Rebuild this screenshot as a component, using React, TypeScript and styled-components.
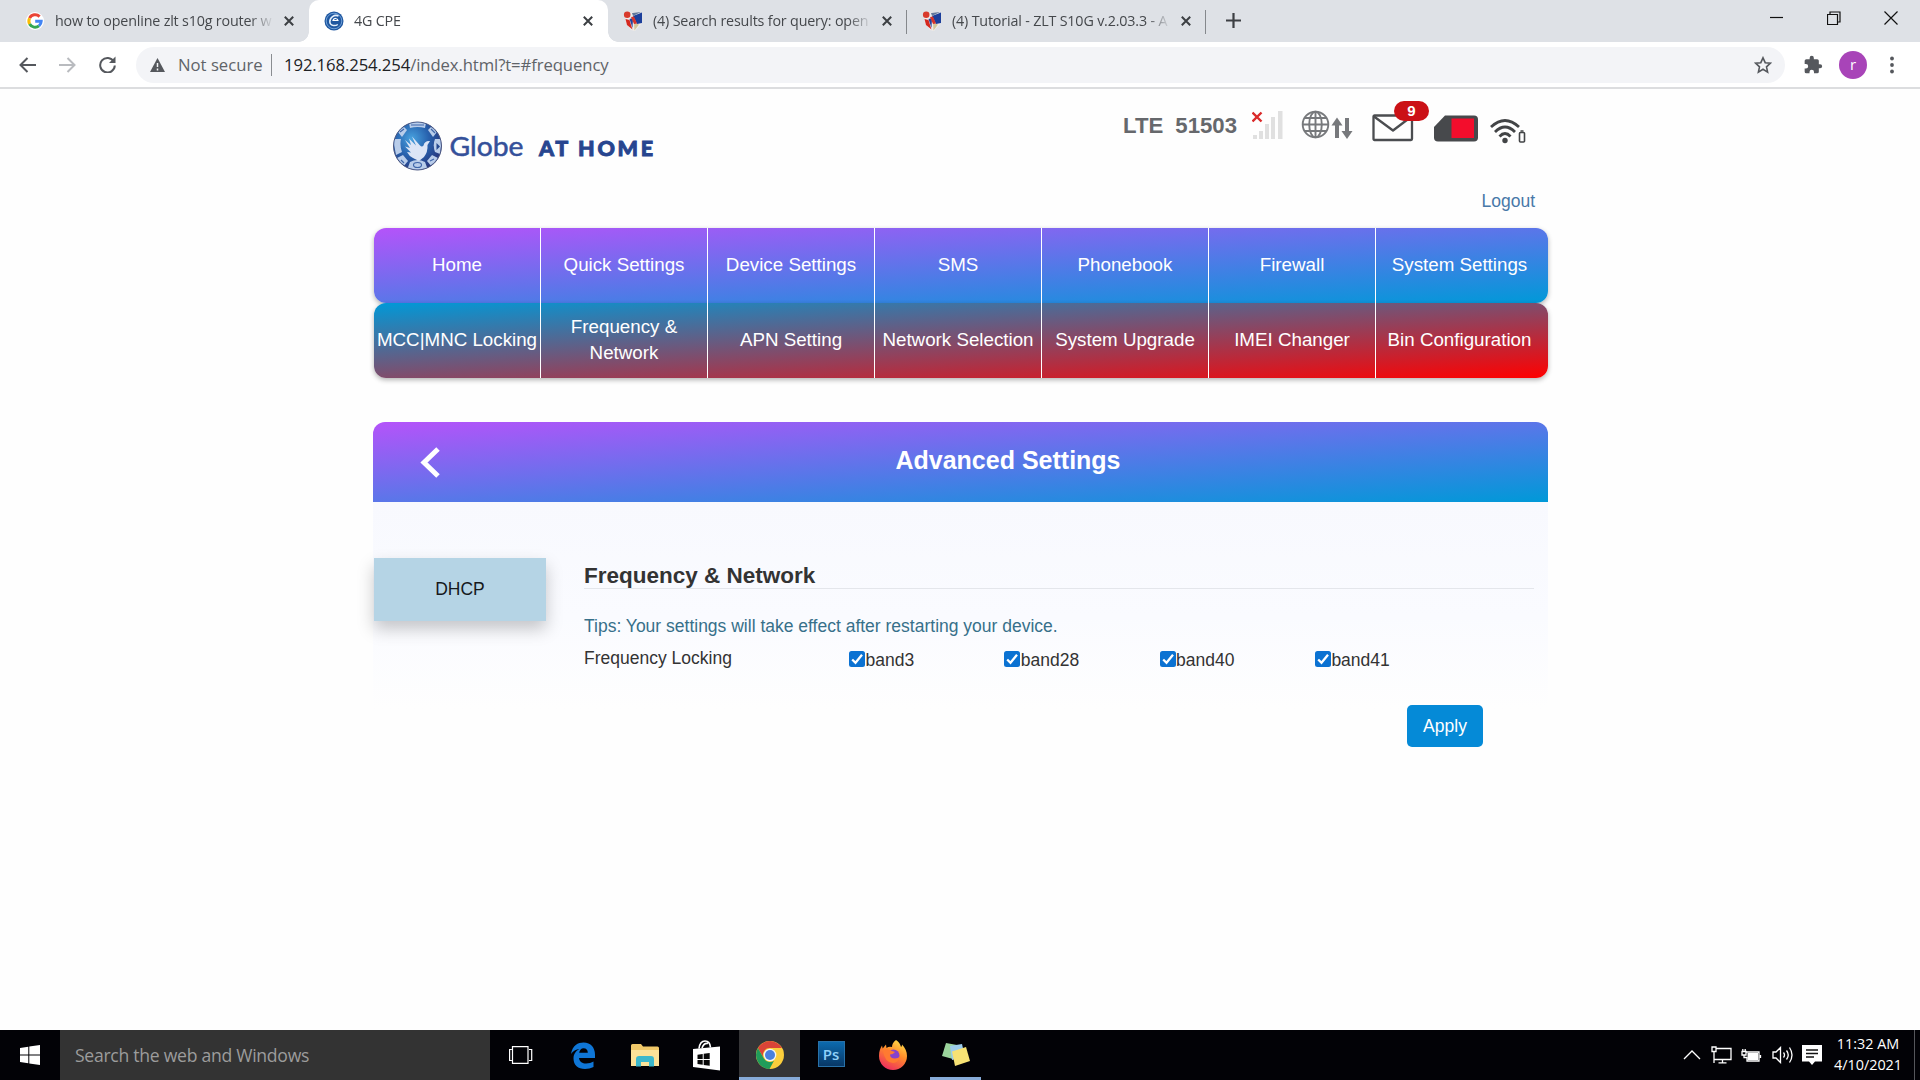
import type { ReactNode } from "react";
import styled, { createGlobalStyle, css } from "styled-components";

interface TabData {
  title: string;
  icon: ReactNode;
  active?: boolean;
  divider?: boolean;
}

const mainMenu = ["Home", "Quick Settings", "Device Settings", "SMS", "Phonebook", "Firewall", "System Settings"];
const extraMenu = [
  "MCC|MNC Locking",
  "Frequency & Network",
  "APN Setting",
  "Network Selection",
  "System Upgrade",
  "IMEI Changer",
  "Bin Configuration",
];
const bands = ["band3", "band28", "band40", "band41"];

const GoogleIcon = () => (
  <svg width="18" height="18" viewBox="0 0 18 18" fill="none" strokeWidth="3">
    <circle cx="9" cy="9" r="9" fill="#fff" />
    <path d="M13.6 4.6A6.2 6.2 0 0 0 3.6 6.2" stroke="#ea4335" />
    <path d="M3.6 6.2a6.2 6.2 0 0 0 0 5.8" stroke="#fbbc05" />
    <path d="M3.6 12a6.2 6.2 0 0 0 9.4 1.8" stroke="#34a853" />
    <path d="M13 13.8A6.2 6.2 0 0 0 15.2 9.2H9.2" stroke="#4285f4" />
  </svg>
);

const CpeIcon = () => (
  <svg width="20" height="20" viewBox="0 0 20 20" fill="none">
    <circle cx="10" cy="10" r="9.5" fill="#1f57a0" />
    <circle cx="10" cy="10" r="7.8" stroke="#6fa0d8" strokeWidth="1" />
    <path d="M14.500 5C10.500 3 5.500 6.500 5.800 11c.3 3.600 5 4.600 8 2.500" stroke="#e4effb" strokeWidth="1.500" />
    <path d="M14 9.500H9c.6-2.800 4.600-2.600 5 0z" stroke="#fff" strokeWidth="1.200" />
  </svg>
);

const ShieldIcon = () => (
  <svg width="20" height="22" viewBox="0 0 20 22">
    <path d="M2 5l8-3 9 1v10l-7 8-4-1-5-7z" fill="#f0ecea" />
    <path d="M10 6l9-3.500V13l-5 1z" fill="#1c3f9b" />
    <path d="M2.500 9l4 1 3 9.500L4 15z" fill="#d5281f" />
    <path d="M6.500 9l3.500-1-.5 10z" fill="#23429c" />
    <path d="M11 13l5 1.500-4.500 6z" fill="#d3c79a" />
    <path d="M9 3l9-1-8 4z" fill="#60779b" />
    <path d="M8 7l3-.5 3 7-3 .5z" fill="#d8342a" />
    <circle cx="4.200" cy="4.800" r="3.300" fill="#d83a2c" />
  </svg>
);

const tabs: TabData[] = [
  { title: "how to openline zlt s10g router w", icon: <GoogleIcon /> },
  { title: "4G CPE", icon: <CpeIcon />, active: true },
  { title: "(4) Search results for query: open", icon: <ShieldIcon />, divider: true },
  { title: "(4) Tutorial - ZLT S10G v.2.03.3 - A", icon: <ShieldIcon />, divider: true },
];

const GlobeAtHomeLogo = () => (
  <svg width="270" height="52" viewBox="0 0 270 52">
    <defs>
      <radialGradient id="ball" cx="38%" cy="35%" r="70%">
        <stop offset="0" stopColor="#48a2df" />
        <stop offset=".5" stopColor="#2862ae" />
        <stop offset="1" stopColor="#27347a" />
      </radialGradient>
      <clipPath id="ballClip">
        <circle cx="25.500" cy="26" r="23.500" />
      </clipPath>
    </defs>
    <circle cx="25.500" cy="26" r="24" fill="url(#ball)" stroke="#4a5680" strokeWidth="1" />
    <g clipPath="url(#ballClip)" fill="#b9cdea">
      <path d="M17 3q8.500-3 17 0l-1 5q-7.500-2-15 0z" />
      <path d="M6 12l5-6 4 4-5 7z" />
      <path d="M45 12l-5-6-4 4 5 7z" />
      <path d="M1 19h8q-1.500 6 1 13l-6 3z" />
      <path d="M50 19h-7q-2.500 6 0 13l5 2z" />
      <path d="M5 38l6-3 5 6-5 6z" />
      <path d="M46 38l-6-3-5 6 5 6z" />
      <path d="M18 42q7.500-4 15 0l3 8H15z" />
    </g>
    <g fill="none" stroke="#3f66a9" strokeWidth="1.2">
      <ellipse cx="25.500" cy="45" rx="4" ry="2.500" />
      <path d="M19 5h13M8 12l4-3M39 9l4 4M9 40l3 3M38 41l4-2" />
    </g>
    <path d="M44.500 23l3.500 3.500-3.500 3.500z" fill="#24488f" />
    <path
      d="M17 18.500l7 7-4-9 8 9q2 2 3.500 0 1-5 6.500-4.500l-2.500 4q.5 7-3.500 12l-5 4-6-3q-4-2-6-6l4 .5-6-6 5 1.500-5-8 6 5z"
      fill="#dce5f6"
    />
    <text x="57.500" y="35.800" fontFamily="Lato" fontSize="26.500" fill="#34509a" stroke="#34509a" strokeWidth=".5" textLength="74" lengthAdjust="spacingAndGlyphs">
      Globe
    </text>
    <text x="147" y="36" fontFamily="Lato" fontSize="21.500" fontWeight="900" fill="#27458f" stroke="#27458f" strokeWidth=".9" textLength="114" lengthAdjust="spacing">
      AT HOME
    </text>
  </svg>
);

const SignalIcon = () => (
  <svg width="33" height="32" viewBox="0 0 33 32">
    <g fill="#e0e0e0">
      <rect x="1" y="26" width="4" height="4" />
      <rect x="7" y="22" width="4" height="8" />
      <rect x="13" y="15" width="4" height="15" />
      <rect x="19" y="8" width="4" height="22" />
      <rect x="26" y="2" width="4.500" height="28" />
    </g>
    <path d="M0.500 3.500l9 9M9.500 3.500l-9 9" stroke="#da2a2a" strokeWidth="2.400" />
  </svg>
);

const NetworkIcon = () => (
  <svg width="52" height="32" viewBox="0 0 52 32" fill="none" stroke="#77797c">
    <g strokeWidth="1.900">
      <circle cx="14.500" cy="15.500" r="12.800" />
      <ellipse cx="14.500" cy="15.500" rx="6.300" ry="12.800" />
      <path d="M14.500 2.500v26M1.700 15.500h25.600M3.800 9h21.400M3.800 22h21.400" />
    </g>
    <path d="M36 29V14M46 9v15" strokeWidth="4" />
    <path d="M36 8.500l5.500 8h-11zM46 30l5.500-8h-11z" fill="#77797c" stroke="none" />
  </svg>
);

const MailIcon = () => (
  <svg width="42" height="28" viewBox="0 0 42 28" fill="none" stroke="#4b4d50" strokeWidth="2.300" strokeLinejoin="round">
    <rect x="1.500" y="1.500" width="38.500" height="24.500" rx="1" />
    <path d="M2 2.500L21 16.500 39.500 2.500" />
  </svg>
);

const SimIcon = () => (
  <svg width="44" height="27" viewBox="0 0 44 27">
    <path d="M11 .5h29a4 4 0 0 1 4 4v18a4 4 0 0 1-4 4H4a4 4 0 0 1-4-4V12z" fill="#47494c" />
    <rect x="17.500" y="3.500" width="22.500" height="19.500" fill="#f30d2c" />
  </svg>
);

const WifiIcon = () => (
  <svg width="38" height="28" viewBox="0 0 38 28" fill="none" stroke="#424446" strokeWidth="2.800">
    <path d="M2 10Q16 -3 30 10" />
    <path d="M6 15Q16 5 26 15" />
    <path d="M10.500 19.500Q16 13.500 21.500 19.500" />
    <circle cx="16" cy="23.500" r="2.700" fill="#424446" stroke="none" />
    <rect x="30.500" y="15.500" width="5" height="9.500" rx="1" strokeWidth="1.600" />
    <path d="M31.500 14h3" strokeWidth="1.500" />
  </svg>
);

const EdgeIcon = () => (
  <svg width="24" height="27" viewBox="0 0 24 27">
    <path
      d="M0 12C1.500 3 7 .5 12.500.5 20 .5 24 6 24 12.500V16H8c.5 4 3.500 5.500 7 5.500 3 0 5.500-.8 7.500-2V25c-2.500 1.300-5.500 2-8.500 2C7 27 2.500 23 2.500 16.500c0-4.500 2.500-8 6-9.500C5 7.300 2 9 0 12zm8.200-1.200h8.600c0-3-1.600-4.600-4.200-4.600-2.400 0-4 1.900-4.400 4.600z"
      fill="#0f76d6"
    />
  </svg>
);

const ExplorerIcon = () => (
  <svg width="28" height="25" viewBox="0 0 28 25">
    <path d="M0 2.500Q0 1 1.500 1H10l2 2.500h14.500Q28 3.500 28 5v17H0z" fill="#f0c869" />
    <path d="M0 7h28v16H0z" fill="#fbe299" />
    <path d="M5 23.500V16q0-3 3-3h12q3 0 3 3v7.500h-5V19h-8v4.500z" fill="#3cb8cc" />
  </svg>
);

const StoreIcon = () => (
  <svg width="28" height="31" viewBox="0 0 28 31">
    <path d="M6 8.500Q7 1 12 1t5.500 6.500M9 8Q11 2.500 15 3.500" fill="none" stroke="#fff" strokeWidth="1.700" />
    <path d="M0 9l27-2.500V30.500L0 27z" fill="#fff" />
    <path d="M4.500 14.800l5.200-.8v5H4.500zM10.700 13.800l6-.9V19h-6zM4.500 20h5.200v4.800l-5.200-.7zM10.700 20h6v5.800l-6-.8z" fill="#080808" />
  </svg>
);

const ChromeIcon = () => (
  <svg width="28" height="28" viewBox="0 0 28 28">
    <circle cx="14" cy="14" r="14" fill="#fbce3c" />
    <path d="M1.900 7A14 14 0 0 1 26.100 7H14a7 7 0 0 0-6.100 10.500z" fill="#db4437" />
    <path d="M1.900 7l6 10.500A7 7 0 0 0 18 19.700L13.500 28A14 14 0 0 1 1.900 7z" fill="#209c5a" />
    <circle cx="14" cy="14" r="6.300" fill="#f3f5f7" />
    <circle cx="14" cy="14" r="5" fill="#4a80dc" />
  </svg>
);

const FirefoxIcon = () => (
  <svg width="30" height="30" viewBox="0 0 30 30">
    <defs>
      <linearGradient id="fox" x1=".8" y1="0" x2=".3" y2="1">
        <stop offset="0" stopColor="#ffe14a" />
        <stop offset=".45" stopColor="#ff8a2a" />
        <stop offset="1" stopColor="#ee2c60" />
      </linearGradient>
    </defs>
    <path
      d="M18 0c3 2 4.500 4.500 5 7 .8-.5 1-1.500 1-2.500 3 3 5 7 5 11.500A14 14 0 0 1 1 16C1 11 2.500 8 4 5.500l.7 3L8 4.500 8.500 8Q11 6 14 7q0-4 4-7z"
      fill="url(#fox)"
    />
    <circle cx="15.500" cy="15.500" r="6" fill="#8742ca" />
    <path d="M5 11q5-3 9 0l3 1q-2 2.500-5 2.500 0 4 5 4 3 0 5-2-1.500 6.500-7 6.500Q7 23 5 11z" fill="#ff7a31" />
  </svg>
);

const NotesIcon = () => (
  <svg width="30" height="26" viewBox="0 0 30 26">
    <path d="M5 1l11 2-4 14-11-3z" fill="#9bd49c" />
    <path d="M9 4l12-2 3 13-13 3z" fill="#9cccec" />
    <path d="M11 9.500L25 5l4 14-15 5z" fill="#f7e274" />
  </svg>
);

export default function App() {
  return (
    <>
      <GlobalStyle />
      <Desktop>
        <TabStrip>
          {tabs.map((tab, idx) => (
            <Tab key={idx} $active={tab.active} $divider={tab.divider}>
              <TabIcon>{tab.icon}</TabIcon>
              <TabTitle>{tab.title}</TabTitle>
              <TabClose width="10" height="10" viewBox="0 0 10 10">
                <path d="M.8.8l8.400 8.400M9.200.8L.8 9.200" />
              </TabClose>
            </Tab>
          ))}
          <NewTab width="15" height="15" viewBox="0 0 15 15">
            <path d="M7.500 0v15M0 7.500h15" />
          </NewTab>
          <WindowControls>
            <svg width="14" height="14" viewBox="0 0 14 14">
              <path d="M0 6.500h13" />
            </svg>
            <svg width="14" height="14" viewBox="0 0 14 14">
              <path d="M.5 3.500h10v10H.5zM3 3.500V1h10v10h-2.500" />
            </svg>
            <svg width="14" height="14" viewBox="0 0 14 14">
              <path d="M.5.5l13 13M13.500.5l-13 13" />
            </svg>
          </WindowControls>
        </TabStrip>

        <Toolbar>
          <NavIcons>
            <svg width="17" height="16" viewBox="0 0 17 16" stroke="#55585d">
              <path d="M17 8H1.500M8.500 1l-7 7 7 7" />
            </svg>
            <svg width="17" height="16" viewBox="0 0 17 16" stroke="#b9bbbf">
              <path d="M0 8h15.500M8.500 1l7 7-7 7" />
            </svg>
            <svg width="17" height="17" viewBox="0 0 17 17" stroke="#55585d">
              <path d="M14.800 5.500A7.300 7.300 0 1 0 15.800 9.500" />
              <path d="M16.500.5V7H10z" fill="#55585d" stroke="none" />
            </svg>
          </NavIcons>
          <AddressBar>
            <svg width="15" height="14" viewBox="0 0 15 14">
              <path d="M7.500 0L15 14H0z" fill="#55585d" />
              <path d="M7.500 5v4M7.500 10.500v2" stroke="#f3f4f7" strokeWidth="1.500" />
            </svg>
            <NotSecure>Not secure</NotSecure>
            <Url>
              192.168.254.254<span>/index.html?t=#frequency</span>
            </Url>
            <svg width="18" height="18" viewBox="0 0 18 18" fill="none" stroke="#55585d" strokeWidth="1.600">
              <path d="M9 1.800l2.200 4.900 5.200.5-3.900 3.600 1.100 5.300L9 13.300l-4.600 2.800 1.100-5.300-3.900-3.600 5.200-.5z" />
            </svg>
          </AddressBar>
          <svg width="20" height="20" viewBox="0 0 24 24" fill="#55585d">
            <path d="M20.500 11H19V7a2 2 0 0 0-2-2h-4V3.500a2.500 2.500 0 0 0-5 0V5H4a2 2 0 0 0-2 2v3.800h1.500a2.700 2.700 0 0 1 0 5.400H2V20a2 2 0 0 0 2 2h3.800v-1.500a2.700 2.700 0 0 1 5.400 0V22H17a2 2 0 0 0 2-2v-4h1.500a2.500 2.500 0 0 0 0-5z" />
          </svg>
          <Avatar>r</Avatar>
          <svg width="6" height="18" viewBox="0 0 6 18" fill="#55585d">
            <circle cx="3" cy="2.500" r="1.900" />
            <circle cx="3" cy="9" r="1.900" />
            <circle cx="3" cy="15.500" r="1.900" />
          </svg>
        </Toolbar>

        <Page>
          <PageHeader>
            <GlobeAtHomeLogo />
            <HeaderRight>
              <StatusBar>
                <NetworkText>
                  <span>LTE</span>
                  <span>51503</span>
                </NetworkText>
                <SignalIcon />
                <NetworkIcon />
                <MailBox>
                  <MailIcon />
                  <Badge>9</Badge>
                </MailBox>
                <SimIcon />
                <WifiIcon />
              </StatusBar>
              <Logout>Logout</Logout>
            </HeaderRight>
          </PageHeader>

          <Menu $from="#b553fa" $to="#0099d8">
            {mainMenu.map((item) => (
              <MenuItem key={item}>{item}</MenuItem>
            ))}
          </Menu>
          <Menu $from="#0099d8" $to="#ff0000">
            {extraMenu.map((item) => (
              <MenuItem key={item}>{item}</MenuItem>
            ))}
          </Menu>

          <PanelHeader>
            <svg width="21" height="31" viewBox="0 0 21 31" fill="none" stroke="#fff" strokeWidth="5">
              <path d="M18 2L4 15.500 18 29" />
            </svg>
            <PanelTitle>Advanced Settings</PanelTitle>
          </PanelHeader>
          <PanelBody>
            <SideItem>DHCP</SideItem>
            <Content>
              <Heading>Frequency &amp; Network</Heading>
              <Tips>Tips: Your settings will take effect after restarting your device.</Tips>
              <FormRow>
                <FieldName>Frequency Locking</FieldName>
                {bands.map((band) => (
                  <Band key={band}>
                    <svg width="16" height="16" viewBox="0 0 16 16">
                      <rect width="16" height="16" rx="2.500" fill="#0b72d2" />
                      <path d="M3.200 8.500l3.300 3.300L13 3.800" fill="none" stroke="#fff" strokeWidth="2.300" />
                    </svg>
                    {band}
                  </Band>
                ))}
              </FormRow>
              <ApplyButton>Apply</ApplyButton>
            </Content>
          </PanelBody>
        </Page>

        <Taskbar>
          <StartButton>
            <svg width="20" height="20" viewBox="0 0 20 20" fill="#fff">
              <path d="M0 3l8.300-1.200v7.700H0zM9.300 1.600L20 0v9.500H9.300zM0 10.500h8.300v7.700L0 17zM9.300 10.500H20V20L9.300 18.400z" />
            </svg>
          </StartButton>
          <SearchBox>Search the web and Windows</SearchBox>
          <TaskItem>
            <svg width="24" height="18" viewBox="0 0 24 18" fill="none" stroke="#fff" strokeWidth="1.200">
              <path d="M3.500.6h15.500v16.800H3.500zM2.800 3.500H.6v11h2.200M20 3.500h2.700v11H20" />
            </svg>
          </TaskItem>
          <TaskItem>
            <EdgeIcon />
          </TaskItem>
          <TaskItem>
            <ExplorerIcon />
          </TaskItem>
          <TaskItem>
            <StoreIcon />
          </TaskItem>
          <TaskItem $active $running>
            <ChromeIcon />
          </TaskItem>
          <TaskItem>
            <Photoshop>Ps</Photoshop>
          </TaskItem>
          <TaskItem>
            <FirefoxIcon />
          </TaskItem>
          <TaskItem $running>
            <NotesIcon />
          </TaskItem>
          <Tray>
            <svg width="18" height="10" viewBox="0 0 18 10">
              <path d="M1 9l8-8 8 8" />
            </svg>
            <svg width="21" height="18" viewBox="0 0 21 18">
              <path d="M5 2.500h15v11H3V6M11.500 13.500v3M7.500 16.800h8M1 1h4v4.500H1zM3 5.500V17" />
            </svg>
            <svg width="21" height="15" viewBox="0 0 21 15">
              <path d="M5 4h13v9H6V9M19.500 7v3M1 3.500h4V7H1zM1.800 3.500V1M4.200 3.500V1M3 7v2.500h3" />
              <path d="M6.500 5h10.500v7H6.500z" fill="#fff" stroke="none" />
            </svg>
            <svg width="21" height="18" viewBox="0 0 21 18">
              <path d="M1 6h3l4.500-4.500v15L4 12H1zM11.500 6.500q2 2.500 0 5M14.500 4.500q3.500 4.500 0 9M17.500 1.500q5 7.500 0 15" />
            </svg>
            <svg width="20" height="20" viewBox="0 0 20 20">
              <path d="M0 0h20v16.500h-7L10 20l-3-3.500H0z" fill="#fff" stroke="none" />
              <path d="M4 5h12M4 8.500h12M4 12h8" stroke="#111" />
            </svg>
          </Tray>
          <Clock>
            <span>11:32 AM</span>
            <span>4/10/2021</span>
          </Clock>
        </Taskbar>
      </Desktop>
    </>
  );
}

const GlobalStyle = createGlobalStyle`
  * {
    box-sizing: border-box;
  }
  body {
    margin: 0;
    background: #fefefe;
    overflow: hidden;
  }
  svg {
    display: block;
    flex-shrink: 0;
  }
`;

const uiFont = css`
  font-family: "Open Sans", "Noto Sans", sans-serif;
`;

const Desktop = styled.div`
  display: flex;
  flex-direction: column;
  width: 1920px;
  height: 1080px;
  ${uiFont}
`;

const TabStrip = styled.div`
  display: flex;
  height: 42px;
  padding-left: 10px;
  background: #dee1e6;
`;
const Tab = styled.div<{ $active?: boolean; $divider?: boolean }>`
  display: flex;
  align-items: center;
  width: 299px;
  padding: 0 15px 1px;
  position: relative;
  background: ${(p) => (p.$active ? "#fff" : "transparent")};
  border-radius: 10px 10px 0 0;

  ${(p) =>
    p.$active &&
    css`
      &::before,
      &::after {
        content: "";
        position: absolute;
        bottom: 0;
        width: 10px;
        height: 10px;
      }
      &::before {
        left: -10px;
        background: radial-gradient(circle at 0 0, transparent 9.500px, #fff 10px);
      }
      &::after {
        right: -10px;
        background: radial-gradient(circle at 100% 0, transparent 9.500px, #fff 10px);
      }
    `}
  ${(p) =>
    p.$divider &&
    css`
      background: linear-gradient(#85888c, #85888c) right 10px / 1px 24px no-repeat;
      border-radius: 0;
    `}
`;
const TabIcon = styled.div`
  display: flex;
  justify-content: center;
  width: 20px;
  margin-right: 10px;
`;
const TabTitle = styled.div`
  width: 219px;
  white-space: nowrap;
  font-size: 14.3px;
  letter-spacing: -0.17px;
  color: #45484c;
  mask-image: linear-gradient(to right, #000 195px, transparent 219px);
`;
const TabClose = styled.svg`
  margin-left: 11px;
  stroke: #3c3f43;
  stroke-width: 2;
`;
const NewTab = styled.svg`
  margin: 13px 0 0 20px;
  stroke: #3c3f43;
  stroke-width: 2.2;
`;
const WindowControls = styled.div`
  display: flex;
  gap: 43px;
  margin: 11px 22px 0 auto;
  fill: none;
  stroke: #111;
  stroke-width: 1.2;
`;

const Toolbar = styled.div`
  display: flex;
  align-items: center;
  height: 47px;
  padding: 0 24px 0 19px;
  background: #fff;
  border-bottom: 2px solid #dcdddf;
`;
const NavIcons = styled.div`
  display: flex;
  align-items: center;
  gap: 23px;
  width: 117px;
  fill: none;
  stroke-width: 2;
`;
const AddressBar = styled.div`
  display: flex;
  align-items: center;
  width: 1649px;
  height: 36px;
  margin-right: 18px;
  padding: 0 13px 0 14px;
  border-radius: 18px;
  background: #f3f4f7;
`;
const NotSecure = styled.div`
  margin-left: 13px;
  width: 94px;
  line-height: 22px;
  white-space: nowrap;
  border-right: 1px solid #8a8d91;
  font-size: 16.7px;
  color: #5f6368;
`;
const Url = styled.div`
  flex: 1;
  margin-left: 12px;
  font-size: 16.7px;
  letter-spacing: -0.1px;
  color: #202124;

  span {
    color: #5f6368;
  }
`;
const Avatar = styled.div`
  width: 28px;
  height: 28px;
  margin: 0 22px 0 16px;
  border-radius: 50%;
  background: #a844b8;
  color: #fff;
  font-size: 15px;
  line-height: 26px;
  text-align: center;
`;

const Page = styled.div`
  flex: 1;
  width: 1175px;
  margin-left: 373px;
  font-family: "Liberation Sans", Arial, sans-serif;
  font-size: 17.5px;
  line-height: 25px;
  color: #333;
`;
const PageHeader = styled.div`
  display: flex;
  justify-content: space-between;
  height: 139px;
  padding: 31px 13px 0 19px;
`;
const HeaderRight = styled.div`
  display: flex;
  flex-direction: column;
  align-items: flex-end;
  margin-top: -11px;
`;
const StatusBar = styled.div`
  display: flex;
  align-items: flex-start;
  margin-right: 8px;

  > svg:nth-of-type(1) {
    margin: 0 16px 0 15px;
  }
  > svg:nth-of-type(2) {
    margin-right: 19px;
  }
  > svg:nth-of-type(3) {
    margin: 6px 11px 0 20px;
  }
  > svg:nth-of-type(4) {
    margin-top: 8px;
  }
`;
const NetworkText = styled.div`
  display: flex;
  gap: 12px;
  padding-top: 4px;
  font-size: 22.2px;
  font-weight: bold;
  line-height: 25px;
  color: #66686c;
`;
const MailBox = styled.div`
  position: relative;
  margin-top: 5px;
`;
const Badge = styled.div`
  position: absolute;
  left: 22px;
  top: -13px;
  width: 35px;
  height: 20px;
  border-radius: 10px;
  background: #cb1116;
  color: #fff;
  font-size: 15px;
  font-weight: bold;
  line-height: 20px;
  text-align: center;
`;
const Logout = styled.div`
  margin-top: 44px;
  color: #4878a8;
`;

const Menu = styled.div<{ $from: string; $to: string }>`
  display: flex;
  height: 75px;
  margin-left: 1px;
  border-radius: 12px;
  background: linear-gradient(to bottom right, ${(p) => p.$from}, ${(p) => p.$to});
  box-shadow: 0 2px 5px rgba(0, 0, 0, 0.3);
  color: #fff;
  font-size: 18.75px;
  line-height: 26px;
`;
const MenuItem = styled.div`
  display: flex;
  align-items: center;
  justify-content: center;
  width: 167px;
  padding-bottom: 1px;
  text-align: center;
  border-right: 1px solid #fff;

  &:last-child {
    border-right: none;
  }
`;

const PanelHeader = styled.div`
  display: flex;
  align-items: center;
  height: 80px;
  margin-top: 44px;
  padding-left: 47px;
  border-radius: 12px 12px 0 0;
  background: linear-gradient(to bottom right, #b553fa, #0099d8);
`;
const PanelTitle = styled.h1`
  width: 1010px;
  margin: 0 0 4px 62px;
  font-size: 25px;
  text-align: center;
  color: #fff;
`;
const PanelBody = styled.div`
  display: flex;
  align-items: flex-start;
  gap: 38px;
  height: 230px;
  padding: 56px 14px 0 1px;
  background: linear-gradient(#f8f9fe 0%, #fafbff 50%, #fefefe 90%);
`;
const SideItem = styled.div`
  width: 172px;
  line-height: 63px;
  text-align: center;
  background: #b5d4e5;
  box-shadow: 0 8px 16px rgba(0, 0, 0, 0.22);
  color: #16191c;
`;
const Content = styled.div`
  display: flex;
  flex-direction: column;
  flex: 1;
`;
const Heading = styled.h2`
  margin: 5px 0 25px;
  font-size: 22.5px;
  line-height: 25px;
  border-bottom: 1px solid #e4e6eb;
`;
const Tips = styled.div`
  color: #37708a;
`;
const FormRow = styled.div`
  display: flex;
  height: 66px;
  padding-top: 7px;
`;
const FieldName = styled.div`
  width: 265px;
`;
const Band = styled.div`
  display: flex;
  align-items: center;
  width: 155.3px;
  height: 25px;
  margin-top: 2px;

  svg {
    margin: -3px 0.5px 0 0;
  }
`;
const ApplyButton = styled.button`
  align-self: flex-end;
  width: 76px;
  height: 42px;
  margin-right: 51px;
  padding: 0;
  border: none;
  border-radius: 5px;
  background: #058ad7;
  color: #fff;
  font: inherit;
`;

const Taskbar = styled.div`
  display: flex;
  height: 50px;
  background: #020206;
`;
const StartButton = styled.div`
  display: flex;
  align-items: center;
  justify-content: center;
  width: 60px;
`;
const SearchBox = styled.div`
  width: 430px;
  padding-left: 15px;
  background: #333;
  color: #9c9c9c;
  font-size: 17.6px;
  letter-spacing: -0.28px;
  line-height: 50px;
`;
const TaskItem = styled.div<{ $active?: boolean; $running?: boolean }>`
  display: flex;
  align-items: center;
  justify-content: center;
  width: 62px;
  background: ${(p) => (p.$active ? "#353537" : "transparent")};
  box-shadow: ${(p) => (p.$running ? "inset 0 -3px #87abd8" : "none")};

  &:nth-of-type(7) {
    width: 61px;
    margin-left: 1px;
  }
  &:nth-of-type(10) {
    width: 51px;
    margin-left: 6px;
  }
`;
const Photoshop = styled.div`
  width: 27px;
  height: 26px;
  margin-bottom: 2px;
  border: 1px solid #2871a8;
  background: linear-gradient(#0c6aae, #083765);
  color: #8fd0fa;
  font-size: 15px;
  font-weight: 600;
  line-height: 24px;
  text-align: center;
`;
const Tray = styled.div`
  display: flex;
  align-items: center;
  justify-content: space-between;
  width: 139px;
  margin-left: auto;
  fill: none;
  stroke: #fff;
  stroke-width: 1.3;
`;
const Clock = styled.div`
  display: flex;
  flex-direction: column;
  align-items: center;
  width: 93px;
  padding-top: 3px;
  margin-right: 5px;
  border-right: 1px solid #55565a;
  color: #fff;
  font-size: 14.4px;
  line-height: 21px;
`;
